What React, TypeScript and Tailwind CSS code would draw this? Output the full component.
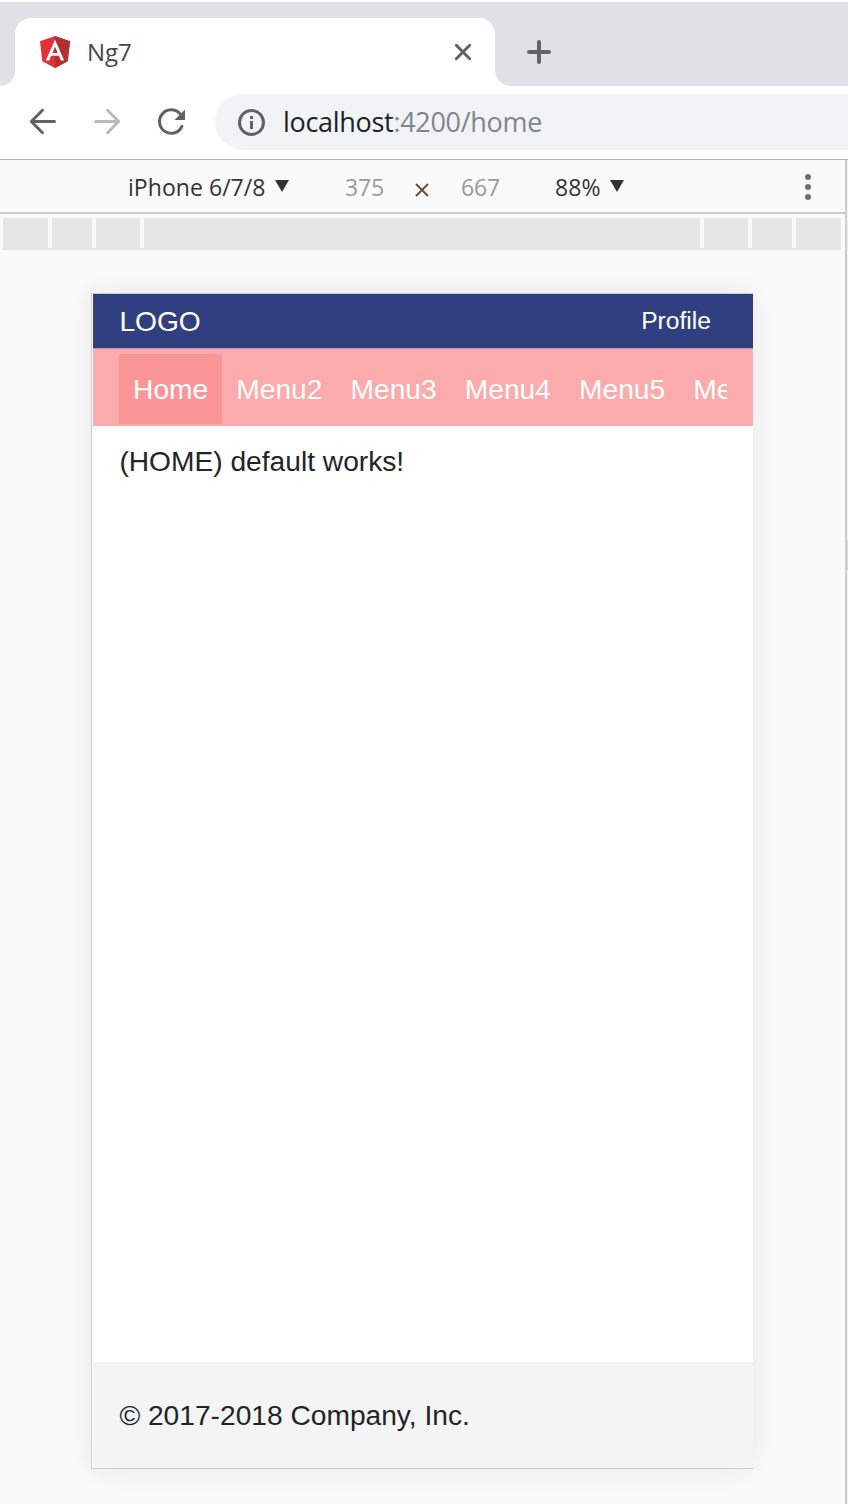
import React from "react";

const menuItems = ["Home", "Menu2", "Menu3", "Menu4", "Menu5", "Menu6"];

function AngularLogo() {
  return (
    <svg width="30" height="32" viewBox="0 0 30 32" className="block shrink-0">
      <path d="M15 0 L30 5.3 L27.7 25.2 L15 32 L2.3 25.2 L0 5.3 Z" fill="#e23237" />
      <path d="M15 0 L30 5.3 L27.7 25.2 L15 32 Z" fill="#b52e31" />
      <path
        fillRule="evenodd"
        d="M15 3.8 L5.8 24.5 H9.2 L11.1 19.8 H18.9 L20.8 24.5 H24.2 Z M15 10.4 L17.7 16.9 H12.3 Z"
        fill="#fff"
      />
    </svg>
  );
}

function TabStrip() {
  return (
    <div className="mt-[2px] flex h-[84px] bg-[#dee1e6]">
      <div className="flex w-[15px] items-end bg-white">
        <div className="h-full w-full rounded-br-[16px] bg-[#dee1e6]" />
      </div>
      <div className="mt-4 flex h-[68px] w-[480px] items-center rounded-t-[16px] bg-white pl-[25px] pr-[23px]">
        <AngularLogo />
        <span className="-mt-px ml-[17px] text-[24px] leading-8 tracking-[-0.1px] text-[#45494d]">Ng7</span>
        <svg width="18" height="18" viewBox="0 0 18 18" className="ml-auto">
          <path d="M2.3 2.3 L15.7 15.7 M15.7 2.3 L2.3 15.7" stroke="#5f6368" strokeWidth="3" strokeLinecap="round" />
        </svg>
      </div>
      <div className="flex-1 bg-white">
        <div className="flex h-full items-center rounded-bl-[16px] bg-[#dee1e6] pl-8 pt-4">
          <svg width="24" height="24" viewBox="0 0 24 24">
            <path d="M12 2 V22 M2 12 H22" stroke="#5f6368" strokeWidth="4" strokeLinecap="round" />
          </svg>
        </div>
      </div>
    </div>
  );
}

function AddressBar() {
  return (
    <div className="flex h-[74px] border-b border-[#b3b3b3] bg-white pt-2">
      <svg width="215" height="56" viewBox="0 0 215 56" fill="none" className="shrink-0">
        <g strokeWidth="3" strokeLinecap="round" strokeLinejoin="round">
          <path d="M54.5 27.5 H31.5 M42.5 16.3 L31.3 27.5 L42.5 38.7" stroke="#5f6368" />
          <path d="M95.5 27.5 H118.5 M107.5 16.3 L118.7 27.5 L107.5 38.7" stroke="#bababa" />
          <path d="M181.9 32.3 A11.7 11.7 0 1 1 179.7 19.5" stroke="#5f6368" />
        </g>
        <path d="M185 15.5 V26 H174.5 Z" fill="#5f6368" />
      </svg>
      <div className="flex h-14 flex-1 items-center rounded-l-full bg-[#f1f3f4] pl-[23px]">
        <svg width="27" height="27" viewBox="0 0 27 27" fill="none" className="shrink-0">
          <circle cx="13.5" cy="13.5" r="12" stroke="#5f6368" strokeWidth="3" />
          <path d="M12 7 H15 V10 H12 Z M12 12 H15 V20 H12 Z" fill="#5f6368" />
        </svg>
        <span className="ml-[18px] whitespace-nowrap text-[27px] leading-9 tracking-[-0.3px] text-[#202124]">
          localhost<span className="text-[#80868b]">:4200/home</span>
        </span>
      </div>
    </div>
  );
}

function DownTriangle() {
  return (
    <svg width="14" height="12" viewBox="0 0 14 12" className="mb-[2px]">
      <path d="M0 0 H14 L7 12 Z" fill="#333" />
    </svg>
  );
}

function DeviceToolbar() {
  return (
    <div className="flex h-[54px] items-center border-b-2 border-[#cacaca] pt-px text-[23px] leading-8 text-[#333]">
      <span className="ml-[128px] w-[147px] whitespace-nowrap tracking-[0.05px]">iPhone 6/7/8</span>
      <DownTriangle />
      <span className="ml-[56px] w-[70px] tracking-[-0.2px] text-[#9a9a9a]">375</span>
      <svg width="14" height="14" viewBox="0 0 14 14" className="mt-[6px]">
        <path d="M1 1 L13 13 M13 1 L1 13" stroke="#705033" strokeWidth="2" />
      </svg>
      <span className="ml-8 w-[94px] tracking-[-0.2px] text-[#9a9a9a]">667</span>
      <span className="w-[55px] tracking-[0.1px]">88%</span>
      <DownTriangle />
      <svg width="8" height="28" viewBox="0 0 8 28" className="ml-auto mr-[33px]">
        <circle cx="4" cy="4" r="3" fill="#6e6e6e" />
        <circle cx="4" cy="14" r="3" fill="#6e6e6e" />
        <circle cx="4" cy="24" r="3" fill="#6e6e6e" />
      </svg>
    </div>
  );
}

function Separator() {
  return <div className="h-[30px] w-1 shrink-0 bg-[#fafafa]" />;
}

function SizePresets() {
  return (
    <div className="ml-[3px] mt-1 flex h-8 w-[838px] bg-[#e5e5e5]">
      <div className="w-[45px]" />
      <Separator />
      <div className="w-10" />
      <Separator />
      <div className="w-11" />
      <Separator />
      <div className="w-[556px]" />
      <Separator />
      <div className="w-11" />
      <Separator />
      <div className="w-10" />
      <Separator />
    </div>
  );
}

function Device() {
  return (
    <div className="ml-[91px] mt-[43px] flex h-[1176px] w-[662px] flex-col border-y border-l border-[#cfcfcf] bg-white pl-px font-['Liberation_Sans',Arial,sans-serif] text-[28.16px] leading-[42px] text-[#212529] shadow-[0_0_30px_rgba(0,0,0,0.08)]">
      <header className="flex h-[55px] items-center justify-between border-b border-[#b59ab5] bg-[#303f80] pl-[26.4px] pr-[42px] text-white">
        <span className="pt-[2px]">LOGO</span>
        <span className="text-[24.64px]">Profile</span>
      </header>
      <nav className="h-[77px] bg-[#fbabab] px-[26px] pt-[5px]">
        <ul className="flex overflow-hidden text-white">
          {menuItems.map((item, i) => (
            <li
              key={item}
              className={
                i === 0
                  ? "h-[70.4px] shrink-0 bg-[#fb9696] px-[14.08px] pt-[15px]"
                  : "h-[70.4px] shrink-0 px-[14.08px] pt-[15px]"
              }
            >
              {item}
            </li>
          ))}
        </ul>
      </nav>
      <main className="flex-1 pl-[26.4px] pt-[15px]">(HOME) default works!</main>
      <footer className="flex h-[106px] items-center bg-[#f4f4f4] pl-[26.4px] pt-[2px]">© 2017-2018 Company, Inc.</footer>
    </div>
  );
}

export default function App() {
  return (
    <div className="h-[1504px] w-[848px] overflow-hidden bg-white font-['Open_Sans','Noto_Sans',sans-serif]">
      <TabStrip />
      <AddressBar />
      <div className="flex h-[1344px] bg-[#fafafa]">
        <div className="w-[845px]">
          <DeviceToolbar />
          <SizePresets />
          <Device />
        </div>
        <div className="w-[2px] bg-[#cdcdcd]" />
        <div className="w-px bg-[#f3f3f3] pt-[380px]">
          <div className="h-[30px] bg-[#d8d8d8]" />
        </div>
      </div>
    </div>
  );
}
